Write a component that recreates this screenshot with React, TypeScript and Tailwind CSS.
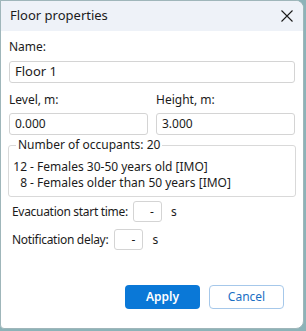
import React from "react";

const occupants = [
	{ n: "12", label: "Females 30-50 years old [IMO]" },
	{ n: "8", label: "Females older than 50 years [IMO]" },
];

const App: React.FC = () => {
	return (
		<div className="h-[331px] w-[306px] bg-[#8db3b8] font-['Noto_Sans',sans-serif] text-[12px] text-[#1b1b1b]">
			<div className="flex h-[329px] w-[304px] flex-col overflow-hidden rounded-r-lg rounded-bl-sm border border-[#9fb6ba] bg-white">
				{/* title bar */}
				<div className="flex h-[30px] shrink-0 items-center justify-between bg-[#eef2f8] pl-[9px] pr-[8px]">
					<span className="text-[13px]">Floor properties</span>
					<svg width="14" height="14" viewBox="0 0 14 14" className="mr-[1px]">
						<path d="M1.5 1.5 L12.5 12.5 M12.5 1.5 L1.5 12.5" stroke="#1b1b1b" strokeWidth="1.1" />
					</svg>
				</div>

				<div className="flex flex-1 flex-col px-[8px] pt-[8px]">
					<div className="leading-[16px]">Name:</div>
					<div className="mt-[6px] flex h-[22px] items-center rounded-[3px] border border-[#d4d4d4] px-[5px] text-[13px]">Floor 1</div>

					<div className="mt-[9px] grid grid-cols-2 gap-[8px]">
						<div>
							<div className="leading-[16px]">Level, m:</div>
							<div className="mt-[5px] flex h-[22px] items-center rounded-[3px] border border-[#d4d4d4] px-[5px]">0.000</div>
						</div>
						<div>
							<div className="leading-[16px]">Height, m:</div>
							<div className="mt-[5px] flex h-[22px] items-center rounded-[3px] border border-[#d4d4d4] px-[5px]">3.000</div>
						</div>
					</div>

					<fieldset className="mx-[-1px] mt-[2px] rounded-[3px] border border-[#d9d9d9] pb-[5px] pl-[4px] pr-[4px]">
						<legend className="ml-[3px] px-[2px] leading-[16px]">Number of occupants: 20</legend>
						<div className="mt-[6px] flex flex-col leading-[16px]">
							{occupants.map((o) => (
								<div key={o.n} className="flex">
									<span className="w-[14px] text-right">{o.n}</span>
									<span className="whitespace-pre"> - {o.label}</span>
								</div>
							))}
						</div>
					</fieldset>

					<div className="mt-[4px] flex items-center pl-[3px]">
						<span className="tracking-[-0.3px]">Evacuation start time:</span>
						<div className="ml-[5px] flex h-[21px] w-[29px] items-center justify-end rounded-[3px] border border-[#d4d4d4] pr-[7px]">-</div>
						<span className="ml-[9px]">s</span>
					</div>
					<div className="mt-[7px] flex items-center pl-[3px]">
						<span className="tracking-[-0.3px]">Notification delay:</span>
						<div className="ml-[6px] flex h-[21px] w-[29px] items-center justify-end rounded-[3px] border border-[#d4d4d4] pr-[7px]">-</div>
						<span className="ml-[9px]">s</span>
					</div>

					<div className="mt-auto mb-[19px] flex justify-end gap-[9px] pr-[11px]">
						<button className="h-[24px] w-[75px] rounded-[4px] bg-[#0a78d7] font-semibold text-white">Apply</button>
						<button className="h-[24px] w-[75px] rounded-[4px] border border-[#a6c8ea] bg-white text-[#1a6fc4]">Cancel</button>
					</div>
				</div>
			</div>
		</div>
	);
};

export default App;
